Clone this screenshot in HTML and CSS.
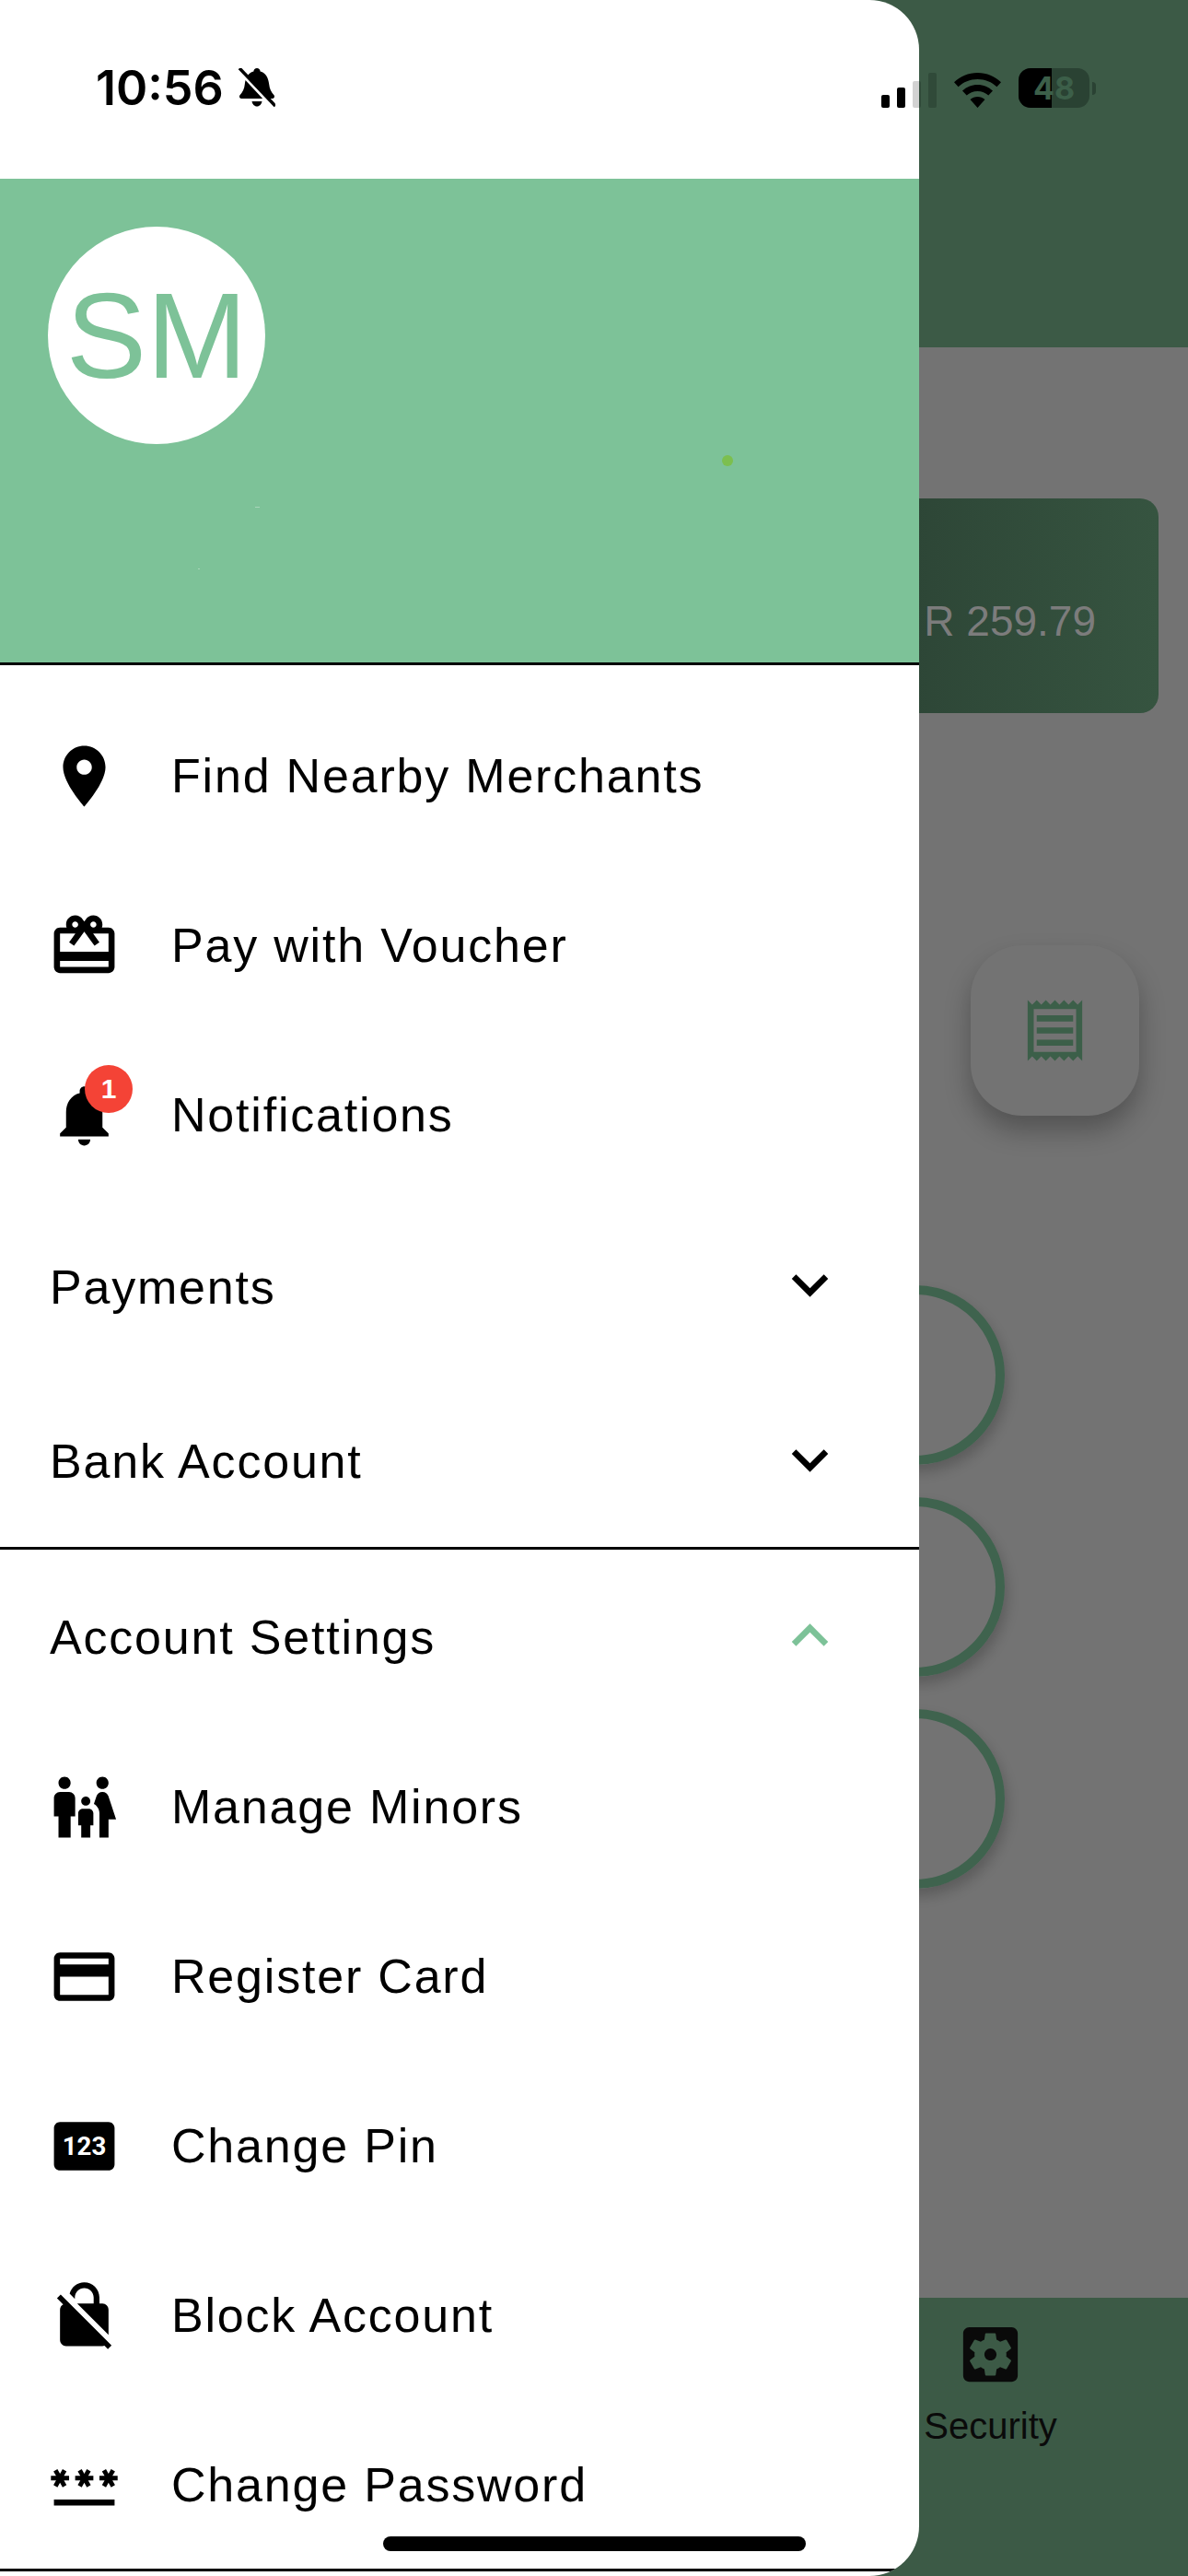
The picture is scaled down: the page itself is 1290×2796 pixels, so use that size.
FILE: index.html
```html
<!DOCTYPE html>
<html lang="en">
<head>
    <meta charset="UTF-8">
    <meta name="viewport" content="width=device-width, initial-scale=1.0">
    <title>Wallet</title>
    <link rel="stylesheet" href="styles.css">
</head>
<body>
    <div class="screen">
        <!-- app behind the drawer, dimmed -->
        <div class="app">
            <div class="app-top"></div>
            <div class="app-main">
                <div class="balance"><span>R 259.79</span></div>
                <div class="fab">
                    <svg class="icon" viewBox="0 0 24 24"><path d="M19.5 3.5L18 2l-1.5 1.5L15 2l-1.5 1.5L12 2l-1.5 1.5L9 2 7.5 3.5 6 2 4.5 3.5 3 2v20l1.5-1.5L6 22l1.5-1.5L9 22l1.5-1.5L12 22l1.5-1.5L15 22l1.5-1.5L18 22l1.5-1.5L21 22V2l-1.5 1.5zM19 19.09H5V4.91h14v14.18zM6 15h12v2H6zm0-4h12v2H6zm0-4h12v2H6z"/></svg>
                </div>
                <div class="rings">
                    <div class="ring"></div>
                    <div class="ring"></div>
                    <div class="ring"></div>
                </div>
            </div>
            <div class="app-bottom">
                <div class="tab">
                    <svg class="icon" viewBox="0 0 24 24"><path d="M12 10c-1.1 0-2 .9-2 2s.9 2 2 2 2-.9 2-2-.9-2-2-2zm7-7H5c-1.1 0-2 .9-2 2v14c0 1.1.9 2 2 2h14c1.1 0 2-.9 2-2V5c0-1.1-.9-2-2-2zm-1.75 9c0 .23-.02.46-.05.68l1.48 1.16c.13.11.17.3.08.45l-1.4 2.42c-.09.15-.27.21-.43.15l-1.74-.7c-.36.28-.76.51-1.18.69l-.26 1.85c-.03.17-.18.3-.35.3h-2.8c-.17 0-.32-.13-.35-.29l-.26-1.85c-.43-.18-.82-.41-1.18-.69l-1.74.7c-.16.06-.34 0-.43-.15l-1.4-2.42c-.09-.15-.05-.34.08-.45l1.48-1.16c-.03-.23-.05-.46-.05-.69 0-.23.02-.46.05-.68l-1.48-1.16c-.13-.11-.17-.3-.08-.45l1.4-2.42c.09-.15.27-.21.43-.15l1.74.7c.36-.28.76-.51 1.18-.69l.26-1.85c.03-.17.18-.3.35-.3h2.8c.17 0 .32.13.35.29l.26 1.85c.43.18.82.41 1.18.69l1.74-.7c.16-.06.34 0 .43.15l1.4 2.42c.09.15.05.34-.08.45l-1.48 1.16c.03.23.05.46.05.69z"/></svg>
                    <span>Security</span>
                </div>
            </div>
        </div>

        <nav class="drawer">
            <div class="status-space"></div>
            <div class="drawer-header">
                <div class="avatar">SM</div>
                <i class="dot"></i>
                <i class="speck speck-a"></i>
                <i class="speck speck-b"></i>
            </div>
            <div class="menu">
                <a class="item" href="#">
                    <svg class="icon" viewBox="0 0 24 24"><path d="M12 2C8.13 2 5 5.13 5 9c0 5.25 7 13 7 13s7-7.75 7-13c0-3.87-3.13-7-7-7zm0 9.5c-1.38 0-2.5-1.12-2.5-2.5s1.12-2.5 2.5-2.5 2.5 1.12 2.5 2.5-1.12 2.5-2.5 2.5z"/></svg>
                    <span>Find Nearby Merchants</span>
                </a>
                <a class="item" href="#">
                    <svg class="icon" viewBox="0 0 24 24"><path d="M20 6h-2.18c.11-.31.18-.65.18-1 0-1.66-1.34-3-3-3-1.05 0-1.96.54-2.5 1.35l-.5.67-.5-.68C10.96 2.54 10.05 2 9 2 7.34 2 6 3.34 6 5c0 .35.07.69.18 1H4c-1.11 0-1.99.89-1.99 2L2 19c0 1.11.89 2 2 2h16c1.11 0 2-.89 2-2V8c0-1.11-.89-2-2-2zm-5-2c.55 0 1 .45 1 1s-.45 1-1 1-1-.45-1-1 .45-1 1-1zM9 4c.55 0 1 .45 1 1s-.45 1-1 1-1-.45-1-1 .45-1 1-1zm11 15H4v-2h16v2zm0-5H4V8h5.08L7 10.83 8.62 12 11 8.76l1-1.36 1 1.36L15.38 12 17 10.83 14.92 8H20v6z"/></svg>
                    <span>Pay with Voucher</span>
                </a>
                <a class="item" href="#">
                    <div class="bell">
                        <svg class="icon" viewBox="0 0 24 24"><path d="M12 22c1.1 0 2-.9 2-2h-4c0 1.1.89 2 2 2zm6-6v-5c0-3.07-1.64-5.64-4.5-6.32V4c0-.83-.67-1.5-1.5-1.5s-1.5.67-1.5 1.5v.68C7.63 5.36 6 7.92 6 11v5l-2 2v1h16v-1l-2-2z"/></svg>
                        <b class="badge">1</b>
                    </div>
                    <span>Notifications</span>
                </a>
                <a class="item group" href="#">
                    <span>Payments</span>
                    <svg class="icon" viewBox="0 0 24 24"><path d="M7.41 8.59L12 13.17l4.59-4.58L18 10l-6 6-6-6 1.41-1.41z"/></svg>
                </a>
                <a class="item group bank" href="#">
                    <span>Bank Account</span>
                    <svg class="icon" viewBox="0 0 24 24"><path d="M7.41 8.59L12 13.17l4.59-4.58L18 10l-6 6-6-6 1.41-1.41z"/></svg>
                </a>
                <div class="line"></div>
                <a class="item group settings" href="#">
                    <span>Account Settings</span>
                    <svg class="icon open" viewBox="0 0 24 24"><path d="M7.41 15.41L12 10.83l4.59 4.58L18 14l-6-6-6 6z"/></svg>
                </a>
                <a class="item sub" href="#">
                    <svg class="icon" viewBox="0 0 24 24"><path d="M16 4c0-1.11.89-2 2-2s2 .89 2 2-.89 2-2 2-2-.89-2-2zm4 18v-6h2.5l-2.54-7.63C19.68 7.55 18.92 7 18.06 7h-.12c-.86 0-1.63.55-1.9 1.37l-.86 2.58C16.26 11.55 17 12.68 17 14v8h3zm-7.5-10.5c.83 0 1.5-.67 1.5-1.5s-.67-1.5-1.5-1.5S11 9.17 11 10s.67 1.5 1.5 1.5zM5.5 6c1.11 0 2-.89 2-2s-.89-2-2-2-2 .89-2 2 .89 2 2 2zm2 16v-7H9V9c0-1.1-.9-2-2-2H4c-1.1 0-2 .9-2 2v6h1.5v7h4zm6.5 0v-4h1v-4c0-.82-.68-1.5-1.5-1.5h-2c-.82 0-1.5.68-1.5 1.5v4h1v4h3z"/></svg>
                    <span>Manage Minors</span>
                </a>
                <a class="item" href="#">
                    <svg class="icon" viewBox="0 0 24 24"><path d="M20 4H4c-1.11 0-1.99.89-1.99 2L2 18c0 1.11.89 2 2 2h16c1.11 0 2-.89 2-2V6c0-1.11-.89-2-2-2zm0 14H4v-6h16v6zm0-10H4V6h16v2z"/></svg>
                    <span>Register Card</span>
                </a>
                <a class="item" href="#">
                    <svg class="icon" viewBox="0 0 24 24"><path d="M20 4H4c-1.11 0-1.99.89-1.99 2L2 18c0 1.11.89 2 2 2h16c1.11 0 2-.89 2-2V6c0-1.11-.89-2-2-2z"/><text class="pin-text" x="12" y="15" text-anchor="middle">123</text></svg>
                    <span>Change Pin</span>
                </a>
                <a class="item" href="#">
                    <svg class="icon" viewBox="0 0 24 24"><path d="M21 21.78L4.22 5 3 6.22l2.04 2.04C4.42 8.6 4 9.25 4 10v10c0 1.1.9 2 2 2h12c.23 0 .45-.05.66-.12L19.78 23 21 21.78zM8.9 6c0-1.71 1.39-3.1 3.1-3.1s3.1 1.39 3.1 3.1v2H9.66L20 18.34V10c0-1.1-.9-2-2-2h-1V6c0-2.76-2.24-5-5-5-2.32 0-4.26 1.59-4.82 3.74L8.9 6.46V6z"/></svg>
                    <span>Block Account</span>
                </a>
                <a class="item last" href="#">
                    <svg class="icon" viewBox="0 0 24 24"><path d="M2 17h20v2H2v-2zm1.15-4.05L4 11.47l.85 1.48 1.3-.75-.85-1.48H7v-1.5H5.3l.85-1.47L4.85 7 4 8.47 3.15 7l-1.3.75.85 1.47H1v1.5h1.7l-.85 1.48 1.3.75zm6.7-.75l1.3.75.85-1.48.85 1.48 1.3-.75-.85-1.48H15v-1.5h-1.7l.85-1.47-1.3-.75L12 8.47 11.15 7l-1.3.75.85 1.47H9v1.5h1.7l-.85 1.48zM23 9.22h-1.7l.85-1.47-1.3-.75L20 8.47 19.15 7l-1.3.75.85 1.47H17v1.5h1.7l-.85 1.48 1.3.75.85-1.48.85 1.48 1.3-.75-.85-1.48H23v-1.5z"/></svg>
                    <span>Change Password</span>
                </a>
                <div class="line"></div>
            </div>
        </nav>

        <div class="status-bar">
            <div class="clock">
                <span>10:56</span>
                <svg class="mute" viewBox="0 0 40 43">
                    <path d="M20 0c-2 0-3.500 1.400-3.600 3.400C10 5.200 7.500 11 6.800 17.500 6.300 22.500 4.500 26 1.500 29.300.5 30.500 1 33 3 33h34c2 0 2.500-2.500 1.500-3.700-3-3.300-4.800-6.800-5.300-11.800C32.500 11 30 5.200 23.600 3.400 23.500 1.400 22 0 20 0z"/>
                    <path d="M14.500 36h11c-.5 3-2.700 5.500-5.500 5.500s-5-2.500-5.500-5.500z"/>
                    <path class="mute-gap" d="M-1 1.500L37 42"/>
                    <path class="mute-slash" d="M1 0L40 41"/>
                </svg>
            </div>
            <div class="status-right">
                <div class="signal">
                    <i class="bar b1"></i><i class="bar b2"></i><i class="bar b3"></i><i class="bar b4"></i>
                </div>
                <svg class="wifi" viewBox="0 0 51 38"><path d="M25.500 0C15.600 0 6.700 3.900 0 10.200l4.600 5C10 10.100 17.400 7 25.500 7s15.500 3.100 20.900 8.200l4.600-5C44.300 3.900 35.400 0 25.500 0zM25.500 13c-6.400 0-12.200 2.500-16.500 6.600l4.700 5c3-2.900 7.200-4.700 11.800-4.700s8.800 1.800 11.800 4.700l4.700-5C37.700 15.500 31.900 13 25.500 13zM25.500 26c-3 0-5.800 1.100-8 3l8 9 8-9c-2.200-1.900-5-3-8-3z"/></svg>
                <div class="battery">
                    <div class="battery-body"><div class="battery-fill"></div><span>48</span></div>
                    <i class="battery-nub"></i>
                </div>
            </div>
        </div>
        <div class="home-bar"></div>
    </div>
</body>
</html>
```

FILE: styles.css
```css
* {
    box-sizing: border-box;
}
body {
    margin: 0;
    padding: 0;
    font-family: "Liberation Sans", Arial, sans-serif;
    background-color: #737373;
}
.screen {
    position: relative;
    width: 1290px;
    height: 2796px;
    overflow: hidden;
}
.icon {
    display: block;
    width: 79px;
    height: 79px;
    flex-shrink: 0;
    fill: #000;
}

/* app behind */
.app {
    display: flex;
    flex-direction: column;
    height: 100%;
}
.app-top {
    height: 377px;
    background-color: #3c5a46;
}
.app-main {
    flex: 1;
    display: flex;
    flex-direction: column;
    background-color: #737373;
}
.balance {
    display: flex;
    align-items: center;
    justify-content: flex-end;
    height: 233px;
    margin: 164px 32px 0 32px;
    padding: 32px 68px 0 0;
    background: linear-gradient(90deg, #2c4435 75%, #365440 100%);
    border-radius: 20px;
    color: #7c7c7c;
    font-size: 46px;
}
.fab {
    display: flex;
    align-items: center;
    justify-content: center;
    width: 183px;
    height: 185px;
    margin: 252px 0 0 1054px;
    background-color: #737373;
    border-radius: 56px;
    box-shadow: 0 16px 28px rgba(0,0,0,0.28);
}
.fab .icon {
    fill: #3c5f49;
}
.rings {
    display: flex;
    flex-direction: column;
    gap: 35px;
    margin: 184px 0 0 896px;
}
.ring {
    width: 195px;
    height: 195px;
    border: 10px solid #3f634e;
    border-radius: 50%;
    box-shadow: 3px 8px 14px rgba(0,0,0,0.2);
}
.app-bottom {
    height: 302px;
    padding: 22px 0 0 1002px;
    background-color: #3c5a46;
}
.tab {
    display: flex;
    flex-direction: column;
    align-items: center;
    gap: 16px;
    width: 147px;
    color: #0a0a0a;
    font-size: 40px;
}
.tab .icon {
    fill: #0a0a0a;
}

/* drawer */
.drawer {
    position: absolute;
    top: 0;
    left: 0;
    bottom: 0;
    width: 998px;
    background-color: #fff;
    border-radius: 0 54px 54px 0;
    overflow: hidden;
}
.status-space {
    height: 194px;
}
.drawer-header {
    position: relative;
    height: 525px;
    padding: 52px 0 0 52px;
    background-color: #7dc298;
}
.avatar {
    display: flex;
    align-items: center;
    justify-content: center;
    width: 236px;
    height: 236px;
    border-radius: 50%;
    background-color: #fff;
    color: #7dc298;
    font-size: 131px;
}
.dot {
    position: absolute;
    left: 784px;
    top: 300px;
    width: 12px;
    height: 12px;
    border-radius: 50%;
    background-color: #7cbf4f;
}
.speck {
    position: absolute;
    height: 1px;
    background-color: #a9d5ba;
}
.speck-a {
    left: 277px;
    top: 356px;
    width: 5px;
}
.speck-b {
    left: 215px;
    top: 423px;
    width: 2px;
}
.menu {
    padding-top: 28px;
    border-top: 3px solid #000;
}
.item {
    display: flex;
    align-items: center;
    gap: 55px;
    height: 184px;
    padding: 0 52px;
    color: #000;
    text-decoration: none;
    font-size: 52px;
    letter-spacing: 1.8px;
}
.item.group {
    justify-content: space-between;
    height: 190px;
    padding: 0 79px 0 54px;
}
.item.group .icon {
    margin-bottom: 6px;
}
.item.bank {
    height: 187px;
}
.item.bank .icon {
    margin-bottom: 3px;
}
.item.settings .icon {
    margin-bottom: 4px;
}
.item.sub {
    margin-top: -3px;
}
.item.last {
    height: 183px;
}
.icon.open {
    fill: #7dc298;
}
.line {
    height: 3px;
    background-color: #000;
}
.bell {
    position: relative;
}
.badge {
    position: absolute;
    left: 40px;
    top: -15px;
    display: flex;
    align-items: center;
    justify-content: center;
    width: 52px;
    height: 52px;
    border-radius: 50%;
    background-color: #f44336;
    color: #fff;
    font-size: 30px;
    letter-spacing: 0;
}
.pin-text {
    fill: #fff;
    font-family: Roboto, sans-serif;
    font-size: 8.4px;
    font-weight: 700;
    letter-spacing: 0;
}

/* status bar */
.status-bar {
    position: absolute;
    top: 74px;
    left: 104px;
    width: 1086px;
    height: 43px;
    display: flex;
    justify-content: space-between;
    align-items: center;
}
.clock {
    display: flex;
    align-items: center;
    gap: 16px;
    font-family: Inter, sans-serif;
    font-weight: 600;
    font-size: 52px;
    letter-spacing: 0;
    color: #000;
}
.mute {
    width: 40px;
    height: 43px;
    fill: #000;
}
.mute-gap {
    fill: none;
    stroke: #fff;
    stroke-width: 3.5;
}
.mute-slash {
    fill: none;
    stroke: #000;
    stroke-width: 3.5;
}
.status-right {
    display: flex;
    align-items: flex-end;
    gap: 19px;
}
.signal {
    display: flex;
    align-items: flex-end;
    gap: 8px;
    height: 38px;
}
.bar {
    width: 9px;
    border-radius: 2px;
}
.b1 {
    height: 14px;
    background-color: #000;
}
.b2 {
    height: 22px;
    background-color: #000;
}
.b3 {
    height: 29px;
    background: linear-gradient(90deg, #d2d2d2 78%, #304a39 78%);
}
.b4 {
    height: 38px;
    background-color: #304a39;
}
.wifi {
    display: block;
    width: 51px;
    height: 38px;
    fill: #000;
}
.battery {
    display: flex;
    align-items: center;
    gap: 3px;
}
.battery-body {
    position: relative;
    display: flex;
    align-items: center;
    justify-content: center;
    width: 77px;
    height: 43px;
    border-radius: 13px;
    background-color: #2a4233;
    overflow: hidden;
    color: #3c5f49;
    font-family: Inter, sans-serif;
    font-weight: 700;
    font-size: 34px;
}
.battery-body span {
    position: relative;
}
.battery-fill {
    position: absolute;
    left: 0;
    top: 0;
    bottom: 0;
    width: 36px;
    background-color: #000;
}
.battery-nub {
    width: 4px;
    height: 14px;
    border-radius: 0 4px 4px 0;
    background-color: #2a4233;
}
.home-bar {
    position: absolute;
    left: 416px;
    top: 2753px;
    width: 459px;
    height: 16px;
    border-radius: 8px;
    background-color: #000;
}
```
